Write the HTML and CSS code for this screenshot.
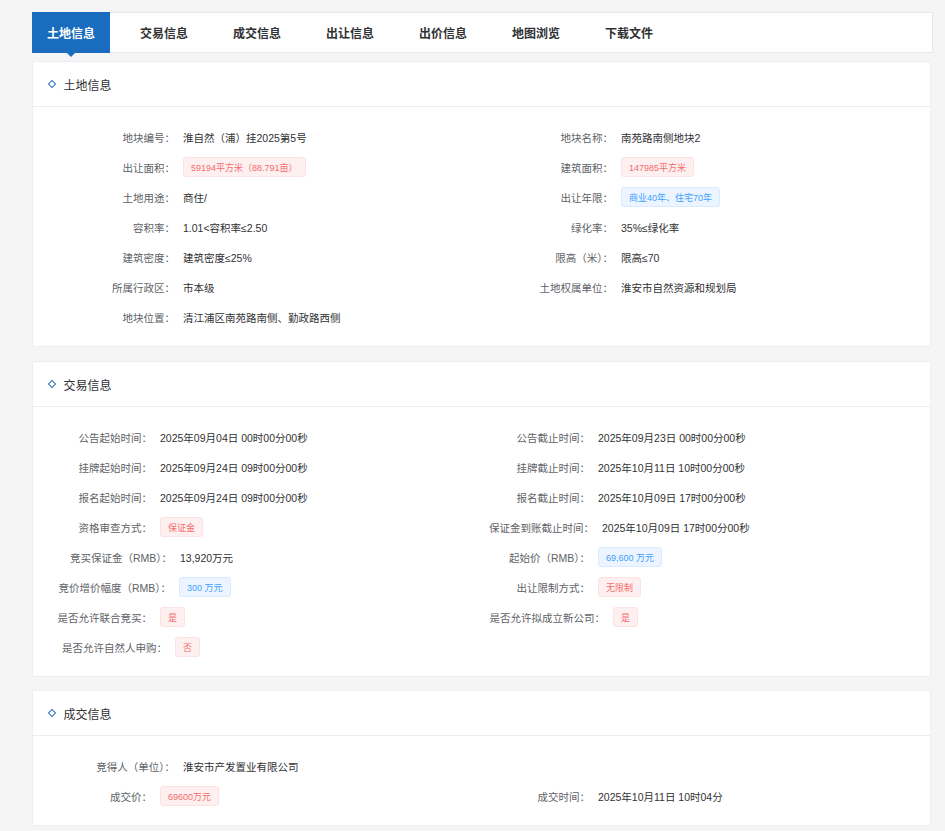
FILE: index.html
```html
<!DOCTYPE html>
<html lang="zh-CN">
<head>
<meta charset="utf-8">
<title>土地信息</title>
<link rel="stylesheet" href="styles.css">
</head>
<body>
<div class="page">
  <nav class="tabs">
    <div class="tab active">土地信息</div>
    <div class="tab">交易信息</div>
    <div class="tab">成交信息</div>
    <div class="tab">出让信息</div>
    <div class="tab">出价信息</div>
    <div class="tab">地图浏览</div>
    <div class="tab">下载文件</div>
  </nav>

  <section class="card land">
    <header class="card-head"><i class="diamond"></i><span>土地信息</span></header>
    <div class="card-body">
      <div class="row">
        <div class="cell left"><span class="lbl">地块编号：</span><span class="val">淮自然（浦）挂2025第5号</span></div>
        <div class="cell right"><span class="lbl">地块名称：</span><span class="val">南苑路南侧地块2</span></div>
      </div>
      <div class="row">
        <div class="cell left"><span class="lbl">出让面积：</span><span class="val"><span class="tag red">59194平方米（88.791亩）</span></span></div>
        <div class="cell right"><span class="lbl">建筑面积：</span><span class="val"><span class="tag red">147985平方米</span></span></div>
      </div>
      <div class="row">
        <div class="cell left"><span class="lbl">土地用途：</span><span class="val">商住/</span></div>
        <div class="cell right"><span class="lbl">出让年限：</span><span class="val"><span class="tag blue">商业40年、住宅70年</span></span></div>
      </div>
      <div class="row">
        <div class="cell left"><span class="lbl">容积率：</span><span class="val">1.01&lt;容积率≤2.50</span></div>
        <div class="cell right"><span class="lbl">绿化率：</span><span class="val">35%≤绿化率</span></div>
      </div>
      <div class="row">
        <div class="cell left"><span class="lbl">建筑密度：</span><span class="val">建筑密度≤25%</span></div>
        <div class="cell right"><span class="lbl">限高（米）：</span><span class="val">限高≤70</span></div>
      </div>
      <div class="row">
        <div class="cell left"><span class="lbl">所属行政区：</span><span class="val">市本级</span></div>
        <div class="cell right"><span class="lbl">土地权属单位：</span><span class="val">淮安市自然资源和规划局</span></div>
      </div>
      <div class="row">
        <div class="cell left"><span class="lbl">地块位置：</span><span class="val">清江浦区南苑路南侧、勤政路西侧</span></div>
      </div>
    </div>
  </section>

  <section class="card trade">
    <header class="card-head"><i class="diamond"></i><span>交易信息</span></header>
    <div class="card-body">
      <div class="row">
        <div class="cell left"><span class="lbl">公告起始时间：</span><span class="val">2025年09月04日 00时00分00秒</span></div>
        <div class="cell right"><span class="lbl">公告截止时间：</span><span class="val">2025年09月23日 00时00分00秒</span></div>
      </div>
      <div class="row">
        <div class="cell left"><span class="lbl">挂牌起始时间：</span><span class="val">2025年09月24日 09时00分00秒</span></div>
        <div class="cell right"><span class="lbl">挂牌截止时间：</span><span class="val">2025年10月11日 10时00分00秒</span></div>
      </div>
      <div class="row">
        <div class="cell left"><span class="lbl">报名起始时间：</span><span class="val">2025年09月24日 09时00分00秒</span></div>
        <div class="cell right"><span class="lbl">报名截止时间：</span><span class="val">2025年10月09日 17时00分00秒</span></div>
      </div>
      <div class="row">
        <div class="cell left"><span class="lbl">资格审查方式：</span><span class="val"><span class="tag red">保证金</span></span></div>
        <div class="cell right"><span class="lbl lbl-112">保证金到账截止时间：</span><span class="val">2025年10月09日 17时00分00秒</span></div>
      </div>
      <div class="row">
        <div class="cell left"><span class="lbl lbl-139">竞买保证金（RMB）：</span><span class="val">13,920万元</span></div>
        <div class="cell right"><span class="lbl">起始价（RMB）：</span><span class="val"><span class="tag blue">69,600 万元</span></span></div>
      </div>
      <div class="row">
        <div class="cell left"><span class="lbl lbl-138">竞价增价幅度（RMB）：</span><span class="val"><span class="tag blue">300 万元</span></span></div>
        <div class="cell right"><span class="lbl">出让限制方式：</span><span class="val"><span class="tag red">无限制</span></span></div>
      </div>
      <div class="row">
        <div class="cell left"><span class="lbl">是否允许联合竞买：</span><span class="val"><span class="tag red">是</span></span></div>
        <div class="cell right"><span class="lbl lbl-123">是否允许拟成立新公司：</span><span class="val"><span class="tag red">是</span></span></div>
      </div>
      <div class="row">
        <div class="cell left"><span class="lbl lbl-134">是否允许自然人申购：</span><span class="val"><span class="tag red">否</span></span></div>
      </div>
    </div>
  </section>

  <section class="card deal">
    <header class="card-head"><i class="diamond"></i><span>成交信息</span></header>
    <div class="card-body">
      <div class="row">
        <div class="cell left"><span class="lbl lbl-142">竞得人（单位）：</span><span class="val">淮安市产发置业有限公司</span></div>
      </div>
      <div class="row">
        <div class="cell left"><span class="lbl">成交价：</span><span class="val"><span class="tag red">69600万元</span></span></div>
        <div class="cell right"><span class="lbl">成交时间：</span><span class="val">2025年10月11日 10时04分</span></div>
      </div>
    </div>
  </section>
</div>
</body>
</html>
```

FILE: styles.css
```css
* { box-sizing: border-box; }

html, body {
  margin: 0;
  padding: 0;
}

body {
  background: #f5f5f6;
  font-family: "Liberation Sans", "Noto Sans CJK SC", sans-serif;
  font-size: 10.5px;
  color: #303133;
}

.page {
  width: 901px;
  margin-left: 32px;
  padding-top: 12px;
  display: flex;
  flex-direction: column;
  gap: 13px;
}

/* tabs */
.tabs {
  display: flex;
  gap: 15px;
  height: 41px;
  background: #fff;
  border: 1px solid #e6e9ef;
  margin-bottom: -5px;
}

.tab {
  position: relative;
  display: flex;
  align-items: center;
  padding: 0 15px 1px;
  margin: -1px 0 -1px -1px;
  font-size: 12px;
  font-weight: 700;
  color: #303133;
  white-space: nowrap;
}

.tab + .tab { margin-left: 0; }

.tab.active {
  background: #1a6dbe;
  color: #fff;
}

.tab.active::after {
  content: "";
  position: absolute;
  left: 50%;
  bottom: -4px;
  margin-left: -4px;
  border-left: 4px solid transparent;
  border-right: 4px solid transparent;
  border-top: 4px solid #1a6dbe;
}

/* cards */
.card {
  width: 899px;
  background: #fff;
  border: 1px solid #ebeef3;
  border-radius: 2px;
}

.card.trade { margin-top: 1px; }

.card-head {
  display: flex;
  align-items: center;
  height: 45px;
  padding-left: 16px;
  border-bottom: 1px solid #ebedf3;
  font-size: 12px;
  color: #303133;
}

.diamond {
  width: 6px;
  height: 6px;
  border: 1.5px solid #2f72c2;
  transform: rotate(45deg);
  margin-right: 8.5px;
  flex-shrink: 0;
}

.card-body {
  padding: 15px 0 14px;
}

.row {
  display: flex;
  align-items: center;
  height: 30px;
}

.cell {
  display: flex;
  align-items: center;
}

.cell.left { width: 449px; }
.cell.right { flex: 1; }

.lbl {
  flex-shrink: 0;
  text-align: right;
  white-space: nowrap;
  color: #606266;
}

.val {
  margin-left: 8px;
  white-space: nowrap;
  color: #303133;
}

.land .left .lbl { width: 142px; }
.land .right .lbl { width: 131px; }

.trade .left .lbl,
.deal .left .lbl { width: 119px; }
.trade .right .lbl,
.deal .right .lbl { width: 108px; }

.card .cell .lbl-112 { width: 112px; }
.card .cell .lbl-123 { width: 123px; }
.card .cell .lbl-134 { width: 134px; }
.card .cell .lbl-138 { width: 138px; }
.card .cell .lbl-139 { width: 139px; }
.card .cell .lbl-142 { width: 142px; }

/* tags */
.tag {
  display: inline-flex;
  align-items: center;
  height: 20px;
  padding: 0 7px;
  border: 1px solid;
  border-radius: 3px;
  font-size: 9px;
  vertical-align: middle;
}

.tag.red {
  background: #fef0f0;
  border-color: #fde2e2;
  color: #f56c6c;
}

.tag.blue {
  background: #ecf5ff;
  border-color: #d9ecff;
  color: #409eff;
}
```
